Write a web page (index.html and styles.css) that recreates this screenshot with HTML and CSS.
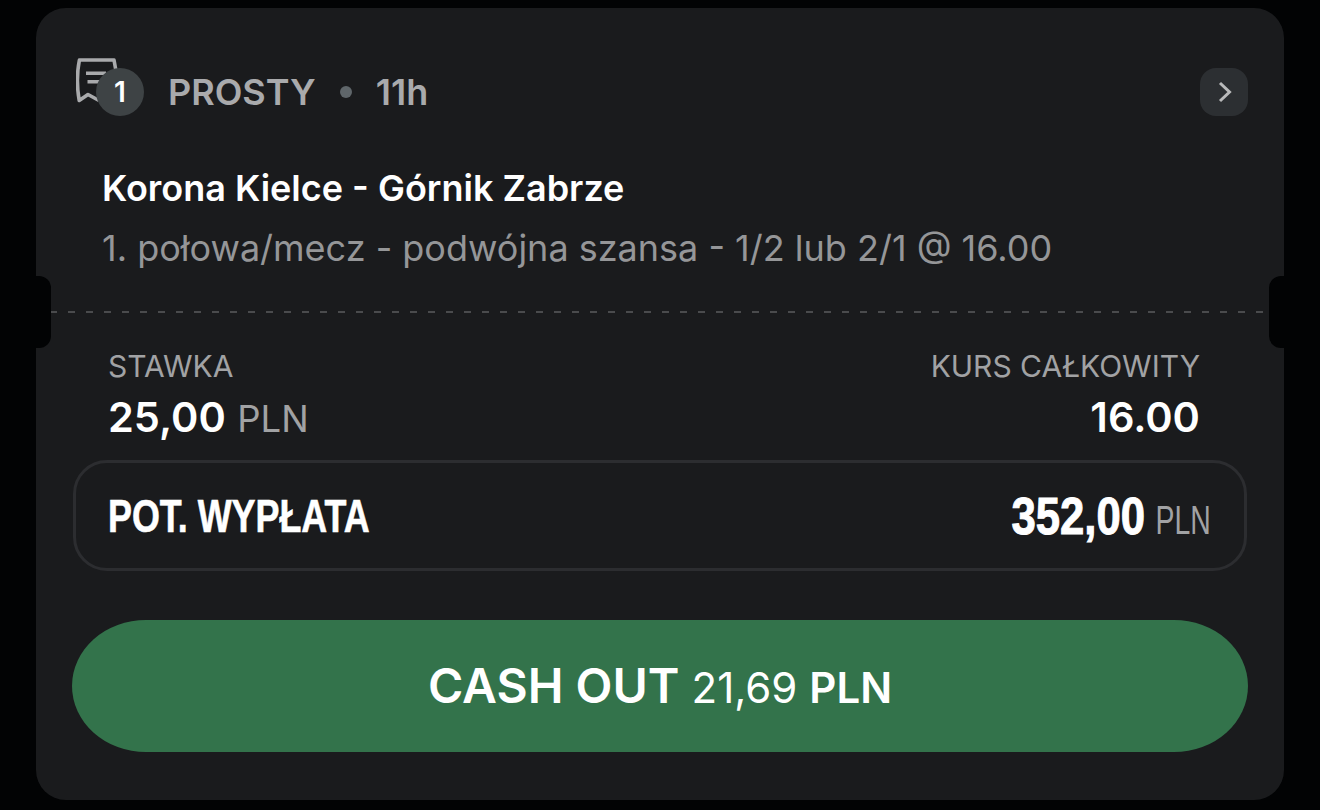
FILE: index.html
```html
<!DOCTYPE html>
<html lang="pl">
<head>
<meta charset="utf-8">
<title>Kupon</title>
<link rel="stylesheet" href="styles.css">
</head>
<body>
<main class="card">
  <span class="notch notch-left"></span>
  <span class="notch notch-right"></span>
  <header class="head">
    <div class="icon-wrap">
      <svg class="ticket" viewBox="0 0 42 46" width="42" height="46" fill="none" stroke="#a9aaac" stroke-width="3.6" stroke-linejoin="round" stroke-linecap="butt">
        <path d="M40 13 L38 2 H3.4 C1 14 1 30 3.2 42.5 L12 36.5 L23 42.5"/>
        <path d="M10 15.3 H30 M11.5 23.7 H27"/>
      </svg>
      <span class="badge">1</span>
    </div>
    <span class="type">PROSTY</span>
    <span class="dot"></span>
    <span class="time">11h</span>
    <button class="chev" aria-label="Dalej">
      <svg viewBox="0 0 14 22" width="14" height="22" fill="none" stroke="#b9babb" stroke-width="3"><path d="M2 2 L11.5 11 L2 20"/></svg>
    </button>
  </header>
  <section class="event">
    <h1 class="match">Korona Kielce - Górnik Zabrze</h1>
    <p class="pick">1. połowa/mecz - podwójna szansa - 1/2 lub 2/1 @ 16.00</p>
  </section>
  <div class="divider"></div>
  <section class="stats">
    <div class="stat">
      <div class="label">STAWKA</div>
      <div class="value">25,00 <span class="cur">PLN</span></div>
    </div>
    <div class="stat stat-right">
      <div class="label">KURS CAŁKOWITY</div>
      <div class="value">16.00</div>
    </div>
  </section>
  <section class="payout">
    <span class="payout-label">POT. WYPŁATA</span>
    <span class="payout-value"><span class="payout-num">352,00</span><span class="payout-cur">PLN</span></span>
  </section>
  <button class="cash"><span class="cash-a">CASH OUT</span> <span class="cash-b">21,69</span> <span class="cash-c">PLN</span></button>
</main>
</body>
</html>
```
FILE: styles.css
```css
* { box-sizing: border-box; }
html, body { margin: 0; height: 810px; overflow: hidden; }
body { background: #020304; font-family: Inter, "Liberation Sans", sans-serif; color: #fff; padding: 8px 36px 10px; }
.card { position: relative; height: 792px; background: #1a1b1d; border-radius: 30px; padding: 60px 36px 48px; display: flex; flex-direction: column; }
.card > * { flex: none; }
.notch { position: absolute; top: 268px; width: 15px; height: 72px; background: #020304; }
.notch-left { left: 0; border-radius: 0 12px 12px 0; }
.notch-right { right: 0; border-radius: 12px 0 0 12px; }
.head { display: flex; align-items: center; height: 48px; font-size: 36px; font-weight: 600; color: #a9aaac; }
.icon-wrap { position: relative; width: 72px; height: 48px; margin-left: 4px; flex: none; }
.ticket { position: absolute; left: 0; top: -10px; }
.badge { position: absolute; left: 20px; top: 0; width: 48px; height: 48px; border-radius: 50%; background: #3e4345; color: #fff; font-size: 28px; font-weight: 600; display: flex; align-items: center; justify-content: center; }
.type { margin-left: 20px; }
.dot { width: 12px; height: 12px; border-radius: 50%; background: #5f666a; margin: 0 24px; }
.chev { margin-left: auto; width: 48px; height: 48px; border: 0; border-radius: 16px; background: #2c2f32; display: flex; align-items: center; justify-content: center; padding: 0 0 0 2px; }
.event { margin: 50px 0 0 30px; display: flex; flex-direction: column; }
.match { margin: 0; font-size: 36px; line-height: 44px; font-weight: 600; color: #fff; }
.pick { margin: 16px 0 0; font-size: 36px; line-height: 44px; font-weight: 400; color: #959698; }
.divider { margin: 41px -16px 0 -22px; height: 2px; background: repeating-linear-gradient(90deg, #4a4b4d 0 7px, transparent 7px 18px); }
.stats { display: flex; justify-content: space-between; margin: 35px 48px 0 36px; }
.stat-right { text-align: right; }
.label { font-size: 30px; line-height: 36px; color: #a1a2a4; }
.value { font-size: 41.5px; line-height: 52px; font-weight: 600; color: #fff; margin-top: 7px; }
.cur { font-size: 36.5px; font-weight: 400; color: #a1a2a4; margin-left: 1px; }
.payout { margin: 15px 1px 0; height: 111px; border: 3px solid #2c2d30; border-radius: 34px; display: flex; align-items: center; justify-content: space-between; padding: 0 33px 0 32px; }
.payout-label, .payout-num, .payout-cur { display: inline-block; font-family: "Liberation Sans", sans-serif; color: #fff; }
.payout-label { font-weight: 700; font-size: 46px; transform: scaleX(0.78); transform-origin: left center; -webkit-text-stroke: 0.6px #fff; }
.payout-value { display: flex; align-items: baseline; }
.payout-num { font-weight: 700; font-size: 52px; transform: scaleX(0.84); transform-origin: right center; margin-right: -12px; -webkit-text-stroke: 1px #fff; }
.payout-cur { font-weight: 400; font-size: 40px; color: #a1a2a4; transform: scaleX(0.71); transform-origin: right center; }
.cash { margin-top: 49px; height: 132px; border: 0; border-radius: 74px / 66px; background: #33734b; color: #fff; font-family: inherit; display: flex; align-items: baseline; justify-content: center; gap: 12px; padding-top: 36px; }
.cash-a { font-size: 48px; font-weight: 600; }
.cash-b { font-size: 42px; font-weight: 400; }
.cash-c { font-size: 42px; font-weight: 600; }
```
